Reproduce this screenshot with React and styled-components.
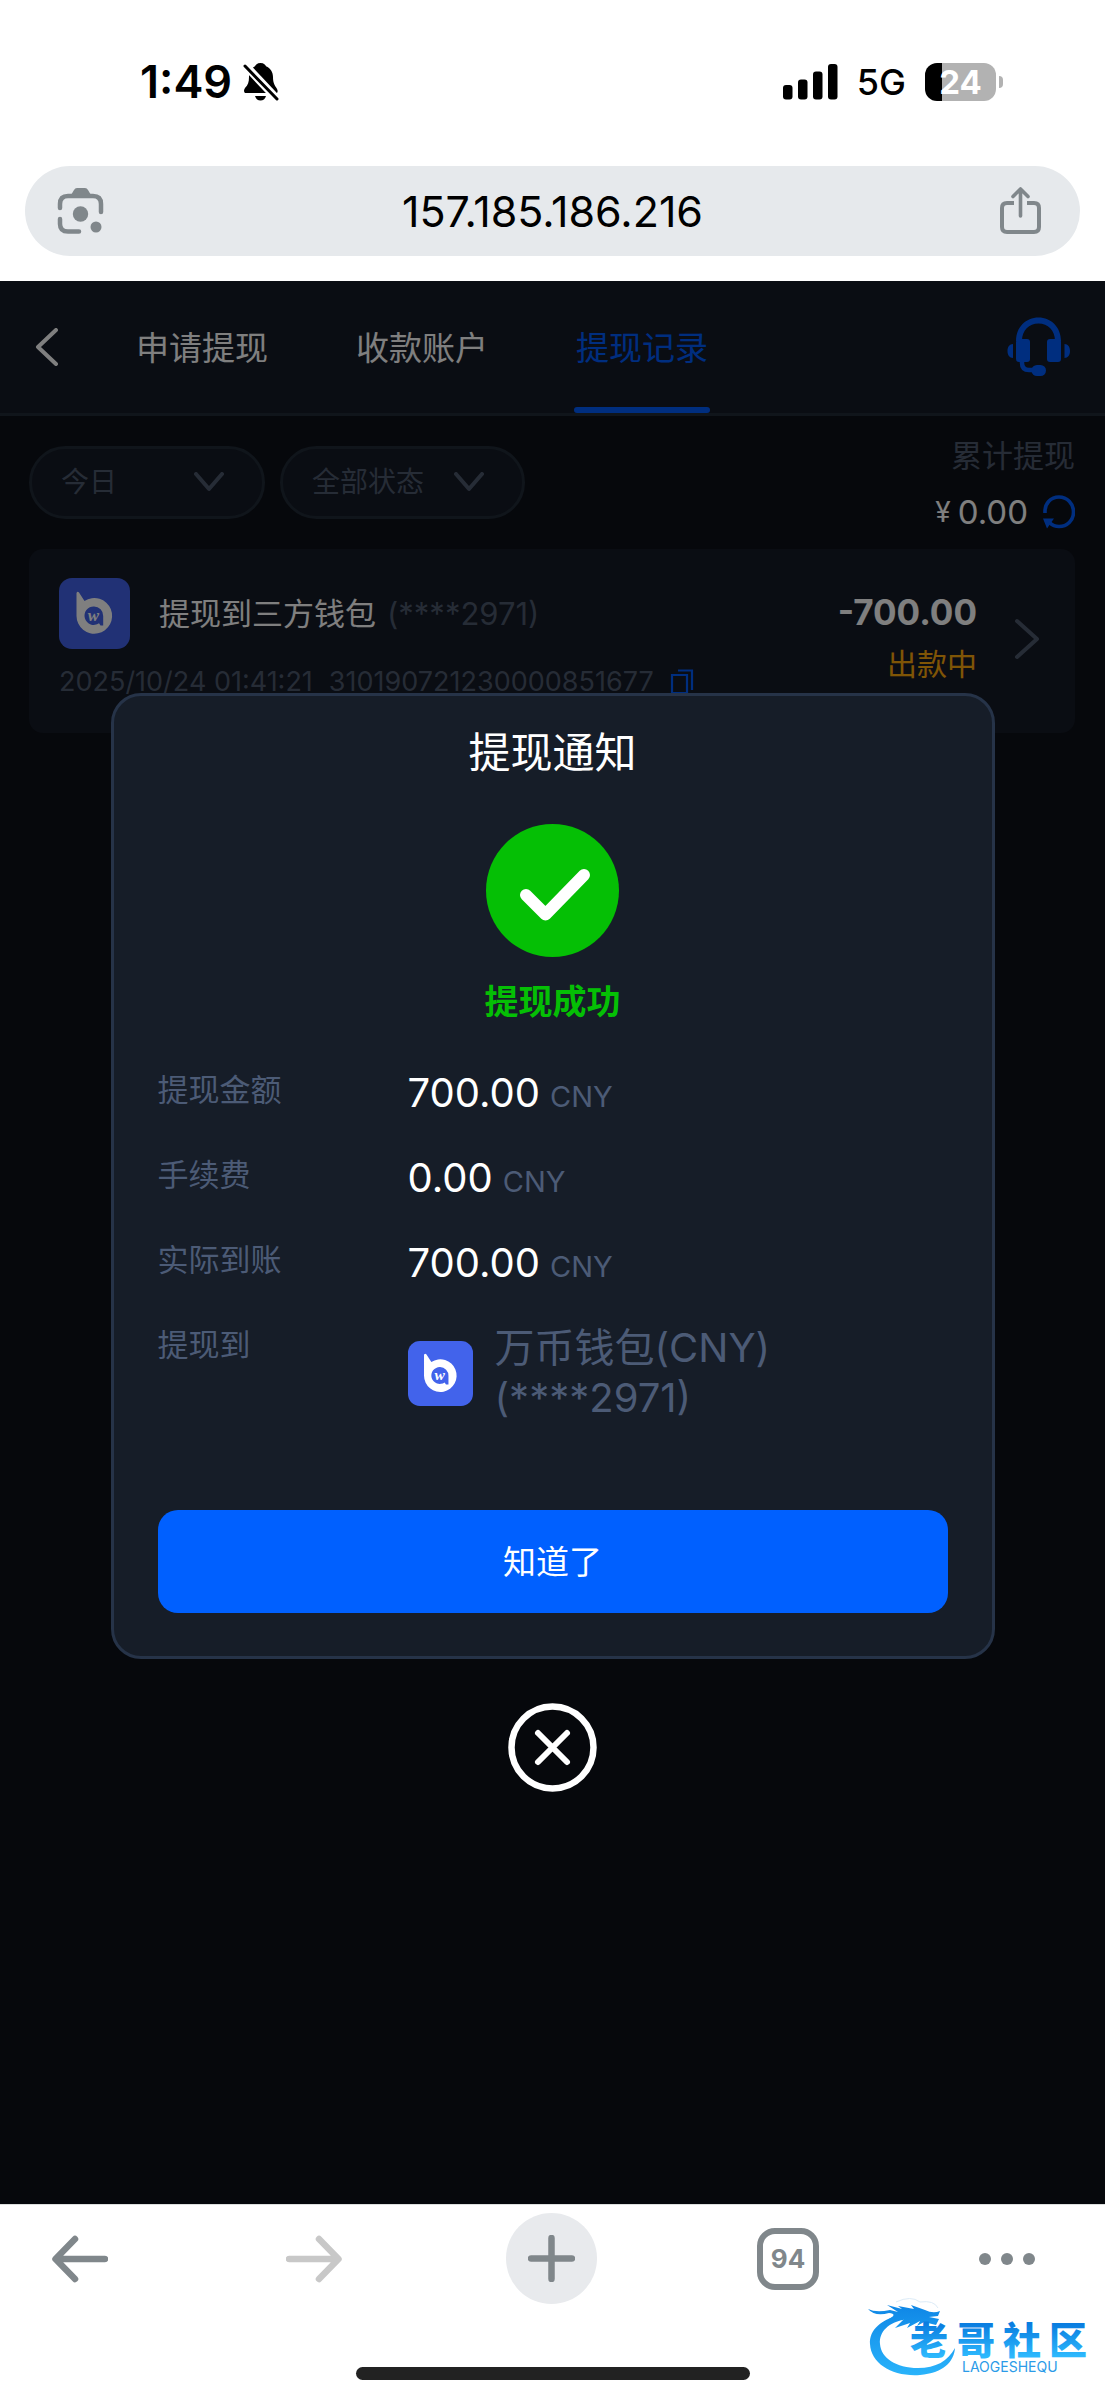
import React from "react";
import styled, { createGlobalStyle } from "styled-components";

const GlobalStyle = createGlobalStyle`
  *, *::before, *::after { box-sizing: border-box; }
  body {
    margin: 0;
    background: #fff;
    font-family: Inter, "Noto Sans CJK SC", sans-serif;
  }
  button, input, select { font: inherit; color: inherit; border: 0; padding: 0; margin: 0; background: none; }
  button { cursor: pointer; }
  svg { display: block; flex: none; }
`;

const Page = styled.div`
  display: flex;
  flex-direction: column;
  min-height: 100vh;
`;

/* ---------- phone status bar and address bar ---------- */

const StatusBar = styled.header`
  display: flex;
  align-items: center;
  justify-content: space-between;
  height: 166px;
  padding: 0 102px 2px 140px;
  color: #000;
`;

const StatusGroup = styled.div`
  display: flex;
  align-items: center;
  gap: ${(p) => p.$gap}px;
`;

const Clock = styled.time`
  font-size: 45px;
  line-height: 52px;
  font-weight: 600;
`;

const Network = styled.span`
  font-size: 36px;
  line-height: 44px;
  font-weight: 500;
`;

const Battery = styled.div`
  display: flex;
  align-items: center;
  gap: 3px;
`;

const BatteryBody = styled.div`
  display: flex;
  align-items: center;
  justify-content: center;
  width: 71px;
  height: 38px;
  border-radius: 12px;
  background: linear-gradient(90deg, #000 17px, #b2b2b2 17px);
  color: #fff;
  font-size: 33px;
  line-height: 38px;
  font-weight: 700;
`;

const BatteryNub = styled.div`
  width: 4px;
  height: 12px;
  border-radius: 0 6px 6px 0;
  background: #b2b2b2;
`;

const AddressBar = styled.div`
  display: flex;
  align-items: center;
  height: 90px;
  margin: 0 25px 25px;
  padding: 0 39px 0 32px;
  border-radius: 45px;
  background: #e6e9ec;
  color: #80878b;
`;

const AddressInput = styled.input`
  flex: 1;
  min-width: 0;
  text-align: center;
  font-size: 43px;
  line-height: 52px;
  color: #000;
  outline: none;
`;

/* ---------- web page ---------- */

const Site = styled.main`
  position: relative;
  flex: 1;
  background: #0d1018;
  color: #fff;
`;

const TabHeader = styled.div`
  display: flex;
  align-items: center;
  height: 135px;
  padding: 0 34px;
  border-bottom: 3px solid #202a36;
  background: #141a26;
`;

const TabList = styled.nav`
  display: flex;
  align-self: stretch;
  gap: 84px;
  flex: 1;
  margin-left: 76px;
`;

const Tab = styled.button`
  display: flex;
  flex-direction: column;
  padding-top: 4px;
  font-size: 33px;
  font-weight: 400;
  color: ${(p) => (p.$active ? "#005cff" : "#fff")};

  &::after {
    content: "";
    width: 100%;
    height: 6px;
    border-radius: 3px;
    background: ${(p) => (p.$active ? "#005cff" : "transparent")};
  }
`;

const TabLabel = styled.span`
  display: flex;
  align-items: center;
  flex: 1;
  padding: 0 2px;
`;

const Toolbar = styled.div`
  display: flex;
  align-items: center;
  gap: 15px;
  padding: 12px 30px 9px 29px;
`;

const Filter = styled.label`
  display: flex;
  align-items: center;
  width: ${(p) => p.$width}px;
  height: 73px;
  margin-bottom: 4px;
  padding: 0 38px 0 29px;
  border: 3px solid #202a36;
  border-radius: 37px;
  background: #141a26;
  color: #4d586c;
`;

const FilterSelect = styled.select`
  appearance: none;
  flex: 1;
  min-width: 0;
  font-size: 28px;
  line-height: 40px;
  outline: none;
`;

const Summary = styled.div`
  display: flex;
  flex-direction: column;
  align-items: flex-end;
  margin-left: auto;
  font-size: 31px;
  line-height: 56px;
`;

const SummaryLabel = styled.span`
  color: #4d586c;
`;

const SummaryValue = styled.span`
  display: flex;
  align-items: center;
  gap: 7px;
  font-size: 33px;
`;

const Currency = styled.small`
  font-size: 28px;
`;

const RefreshButton = styled.button`
  margin-left: 8px;
  color: #005cff;
`;

const Card = styled.article`
  display: flex;
  align-items: flex-start;
  height: 184px;
  margin: 0 30px 0 29px;
  padding: 29px 35px 0 30px;
  border-radius: 14px;
  background: #141a26;
`;

const CardMain = styled.div`
  display: flex;
  flex-direction: column;
  gap: 16px;
  flex: 1;
`;

const CardTitle = styled.div`
  display: flex;
  align-items: center;
  gap: 11px;
  font-size: 31px;
  line-height: 44px;
`;

const TitleText = styled.span`
  margin-left: 18px;
`;

const Muted = styled.span`
  color: #4d586c;
`;

const Meta = styled.div`
  display: flex;
  align-items: center;
  gap: 16px;
  font-size: 27px;
  line-height: 34px;
  color: #4d586c;
`;

const CopyButton = styled.button`
  color: #005cff;
`;

const CardSide = styled.div`
  display: flex;
  flex-direction: column;
  align-items: flex-end;
  padding-top: 8px;
  line-height: 52px;
`;

const Amount = styled.strong`
  font-size: 35px;
  font-weight: 700;
`;

const State = styled.span`
  font-size: 30px;
  color: #ffaa0c;
`;

const OpenButton = styled.button`
  margin: 40px 0 0 37px;
  color: #4d586c;
`;

/* ---------- dialog ---------- */

const Overlay = styled.div`
  position: absolute;
  inset: 0;
  display: flex;
  flex-direction: column;
  align-items: center;
  justify-content: center;
  gap: 44px;
  background: rgba(0, 0, 0, 0.5);
`;

const Dialog = styled.section`
  display: flex;
  flex-direction: column;
  align-items: center;
  width: 80%;
  padding: 27px 44px 43px;
  border: 3px solid #263348;
  border-radius: 30px;
  background: #161d28;
`;

const DialogTitle = styled.h2`
  margin: 0 0 41px;
  font-size: 42px;
  line-height: 60px;
  font-weight: 400;
`;

const Result = styled.p`
  margin: 20px 0 41px;
  font-size: 34px;
  line-height: 50px;
  font-weight: 700;
  color: #05bf05;
`;

const Details = styled.dl`
  display: flex;
  flex-direction: column;
  align-self: stretch;
  gap: 35px;
  margin: 0 0 87px;
`;

const Row = styled.div`
  display: flex;
  align-items: flex-start;
`;

const RowLabel = styled.dt`
  flex: 0 0 250px;
  font-size: 31px;
  line-height: 44px;
  color: #4c5b76;
`;

const RowValue = styled.dd`
  display: flex;
  align-items: ${(p) => (p.$center ? "center" : "baseline")};
  gap: ${(p) => (p.$center ? 22 : 10)}px;
  margin: 0;
  font-size: 40px;
  line-height: 50px;
`;

const Unit = styled.small`
  font-size: 29px;
  line-height: 32px;
  color: #4c5b76;
`;

const Wallet = styled.span`
  color: #4c5b76;
`;

const Confirm = styled.button`
  align-self: stretch;
  height: 103px;
  border-radius: 20px;
  background: #0060ff;
  font-size: 33px;
  line-height: 48px;
`;

/* ---------- browser toolbar ---------- */

const BrowserBar = styled.footer`
  position: relative;
  display: flex;
  flex-direction: column;
  align-items: center;
  gap: 63px;
  padding: 8px 0 20px;
  border-top: 1px solid #dcdfde;
  background: #fff;
`;

const BrowserActions = styled.div`
  display: flex;
  align-items: center;
  justify-content: space-between;
  align-self: stretch;
  padding: 0 70px 0 52px;
`;

const BarButton = styled.button`
  width: ${(p) => p.$width}px;
  color: ${(p) => (p.$dim ? "#c8c8c8" : "#80878b")};
`;

const NewTab = styled.button`
  display: grid;
  place-items: center;
  width: 91px;
  height: 91px;
  border-radius: 50%;
  background: #e8eaed;
  color: #80878b;
`;

const TabCount = styled.button`
  width: 62px;
  height: 62px;
  border: 6px solid #80878b;
  border-radius: 18px;
  font-size: 26px;
  line-height: 48px;
  font-weight: 700;
  color: #80878b;
`;

const HomeIndicator = styled.div`
  width: 394px;
  height: 13px;
  border-radius: 7px;
  background: #222;
`;

const Watermark = styled.div`
  position: absolute;
  right: 14px;
  bottom: 22px;
`;

/* ---------- drawings ---------- */

const line = { fill: "none", stroke: "currentColor", strokeLinecap: "round", strokeLinejoin: "round" };

const BellOff = () => (
  <svg width="36" height="40" viewBox="0 0 36 40" aria-hidden="true">
    <path d="M17.500 1C21 1 22.500 3 23 4.200C27.500 6 30 10 30 15C30 20 31 22.500 33.500 26Q35.500 29 34 31H2Q0 29 2 26C5 23 6 20 6 15C6 10 8.500 6 12 4.200C12.500 3 14 1 17.500 1Z" fill="#000" />
    <path d="M12 34H23Q21.500 38.500 17.500 38.500Q13.500 38.500 12 34Z" fill="#000" />
    <path d="M2 3L35 38" stroke="#fff" strokeWidth="8" />
    <path d="M2 4L34 37" stroke="#000" strokeWidth="3" strokeLinecap="round" />
  </svg>
);

const Signal = () => (
  <svg width="55" height="36" viewBox="0 0 55 36" aria-label="信号">
    <rect x="0" y="21" width="9.500" height="14.500" rx="3" />
    <rect x="15" y="15.500" width="9.500" height="20" rx="3" />
    <rect x="30" y="7.500" width="9.500" height="28" rx="3" />
    <rect x="45" y="0" width="9.500" height="35.500" rx="3" />
  </svg>
);

const Lens = () => (
  <svg width="48" height="48" viewBox="0 0 48 48" aria-hidden="true">
    <path d="M3 21V17Q3 9 11 9H36Q44 9 44 17V25M3 32V37Q3 44.500 11 44.500H22" {...line} strokeWidth="4.500" />
    <path d="M14 8L17 3Q18 1 20 1H28Q30 1 31 3L34 8Z" fill="currentColor" />
    <circle cx="23.500" cy="27" r="7.700" fill="currentColor" />
    <circle cx="39" cy="40" r="5.500" fill="currentColor" />
  </svg>
);

const Share = () => (
  <svg width="41" height="48" viewBox="0 0 41 48" aria-hidden="true">
    <path d="M14 16H7Q2 16 2 21V40Q2 45 7 45H34Q39 45 39 40V21Q39 16 34 16H27" fill="none" stroke="currentColor" strokeWidth="4" />
    <path d="M20.500 29V3M13 9.500L20.500 2L28 9.500" {...line} strokeWidth="3.600" />
  </svg>
);

const Chevron = ({ w, h, d, sw = 4 }) => (
  <svg width={w} height={h} viewBox={`0 0 ${w} ${h}`} aria-hidden="true">
    <path d={d} {...line} strokeWidth={sw} />
  </svg>
);

const Headset = () => (
  <svg width="64" height="60" viewBox="0 0 64 60" fill="#005cff" aria-hidden="true">
    <path d="M9 24C9 10 19 0.500 31.500 0.500S54 10 54 24H48C48 13 41 6.500 31.500 6.500S15 13 15 24Z" />
    <rect x="9" y="22" width="14" height="23" rx="3" />
    <rect x="40" y="22" width="14" height="23" rx="3" />
    <path d="M6 27V41C2.500 41 0.500 38 0.500 34S2.500 27 6 27ZM57.500 27V41C61 41 63 38 63 34S61 27 57.500 27Z" />
    <path d="M15 44V46Q15 53 22 53H28" fill="none" stroke="#005cff" strokeWidth="4.500" />
    <rect x="24.500" y="48" width="14.500" height="11" rx="5.500" />
  </svg>
);

const Refresh = () => (
  <svg width="32" height="34" viewBox="0 0 32 34" aria-hidden="true">
    <path d="M2 18C1.500 8 8 2 16 2C24 2 30.500 8.500 30.500 17S24 31.500 16 31.500Q10.500 31.500 7 28" fill="none" stroke="currentColor" strokeWidth="3.600" />
    <path d="M0 23.500H11L4 33.500Z" fill="currentColor" />
  </svg>
);

const Copy = () => (
  <svg width="24" height="26" viewBox="0 0 24 26" aria-hidden="true">
    <path d="M2 6H17V24H2ZM8 1.500H22V21" fill="none" stroke="currentColor" strokeWidth="2.200" />
  </svg>
);

const WalletLogo = ({ size }) => (
  <svg width={size} height={size} viewBox="0 0 71 71" role="img" aria-label="钱包">
    <rect width="71" height="71" rx="13" fill="#4263eb" />
    <path d="M17.500 38V15Q18.500 13 20 14.500L25.500 23A17.800 17.800 0 1 1 17.500 38Z" fill="#fff" />
    <path d="M35 28.500A9.200 9.200 0 0 1 44.200 38V47.500H41.500L40 45.200A9.200 9.200 0 1 1 35 28.500Z" fill="#4263eb" />
    <text x="34.500" y="42.500" textAnchor="middle" fontFamily="Liberation Serif, serif" fontSize="17" fontWeight="700" fontStyle="italic" fill="#fff">w</text>
  </svg>
);

const Success = () => (
  <svg width="133" height="133" viewBox="0 0 133 133" aria-hidden="true">
    <circle cx="66.500" cy="66.500" r="66.500" fill="#05bf05" />
    <path d="M40 71L59.500 90.500L98 51" fill="none" stroke="#fff" strokeWidth="12" strokeLinecap="round" strokeLinejoin="round" />
  </svg>
);

const CloseIcon = () => (
  <svg width="89" height="89" viewBox="0 0 89 89" aria-hidden="true">
    <circle cx="44.500" cy="44.500" r="41" fill="none" stroke="#fff" strokeWidth="6.500" />
    <path d="M30 30L59 59M59 30L30 59" stroke="#fff" strokeWidth="6" strokeLinecap="round" />
  </svg>
);

const Arrow = ({ flip }) => (
  <svg width="56" height="48" viewBox="0 0 56 48" aria-hidden="true">
    <path d={flip ? "M3 24H52M33 4L52.500 24L33 44" : "M53 24H4M23 4L3.500 24L23 44"} {...line} strokeWidth="6.500" />
  </svg>
);

const Plus = () => (
  <svg width="47" height="47" viewBox="0 0 47 47" aria-hidden="true">
    <path d="M23.500 3V44M3 23.500H44" {...line} strokeWidth="6.500" />
  </svg>
);

const Dots = () => (
  <svg width="56" height="12" viewBox="0 0 56 12" fill="currentColor" aria-hidden="true">
    <circle cx="6" cy="6" r="6" />
    <circle cx="28" cy="6" r="6" />
    <circle cx="50" cy="6" r="6" />
  </svg>
);

const DragonLogo = () => (
  <svg width="224" height="84" viewBox="0 0 224 84" role="img" aria-label="老哥社区">
    <defs>
      <linearGradient id="ink" gradientUnits="userSpaceOnUse" x1="0" y1="12" x2="0" y2="82">
        <stop offset="0" stopColor="#0f87e6" />
        <stop offset="1" stopColor="#2ab4fb" />
      </linearGradient>
      <linearGradient id="word" gradientUnits="userSpaceOnUse" x1="0" y1="30" x2="0" y2="62">
        <stop offset="0" stopColor="#0a7de0" />
        <stop offset="1" stopColor="#2db8fd" />
      </linearGradient>
    </defs>
    <path d="M38 19C14 25 2 36 3 50C4 70 26 83 53 81C76 79 87 68 88 54C81 67 69 74 51 74C29 74 14 64 13 50C12 38 21 28 40 25Z" fill="url(#ink)" />
    <path d="M1 15Q9 19 23 16L31 18L20 11L35 15L31 12L47 15L44 11L58 16Q66 20 73 17L71 22L62 23L72 25L69 31L57 28L50 32L53 27L40 34L43 29L28 34L37 25L22 25Q31 20 22 19Q8 23 1 15Z" fill="url(#ink)" />
    <path d="M29 8Q44 1 53 8Q67 6 71 14" fill="none" stroke="#dcebf7" strokeWidth="1" />
    <g fill="url(#word)" fontFamily="Noto Sans CJK SC, sans-serif" fontSize="38" fontWeight="900" textAnchor="middle">
      <text x="62" y="60">老</text>
      <text x="109" y="60">哥</text>
      <text x="155" y="60">社</text>
      <text x="201" y="60">区</text>
    </g>
    <text x="95" y="78" fontFamily="Inter, sans-serif" fontSize="14" fill="#2b9be8">LAOGESHEQU</text>
  </svg>
);

const amounts = [
  { label: "提现金额", value: "700.00" },
  { label: "手续费", value: "0.00" },
  { label: "实际到账", value: "700.00" },
];

const tabs = ["申请提现", "收款账户", "提现记录"];

export default function App() {
  return (
    <Page>
      <GlobalStyle />
      <StatusBar>
        <StatusGroup $gap={11}>
          <Clock>1:49</Clock>
          <BellOff />
        </StatusGroup>
        <StatusGroup $gap={19}>
          <Signal />
          <Network>5G</Network>
          <Battery>
            <BatteryBody>24</BatteryBody>
            <BatteryNub />
          </Battery>
        </StatusGroup>
      </StatusBar>
      <AddressBar>
        <button type="button" aria-label="相机搜索"><Lens /></button>
        <AddressInput aria-label="网址" defaultValue="157.185.186.216" />
        <button type="button" aria-label="分享"><Share /></button>
      </AddressBar>

      <Site>
        <TabHeader>
          <button type="button" aria-label="返回"><Chevron w={24} h={38} d="M22 2L4 19L22 36" /></button>
          <TabList>
            {tabs.map((name, i) => (
              <Tab key={name} type="button" $active={i === 2}>
                <TabLabel>{name}</TabLabel>
              </Tab>
            ))}
          </TabList>
          <button type="button" aria-label="客服"><Headset /></button>
        </TabHeader>

        <Toolbar>
          <Filter $width={236}>
            <FilterSelect aria-label="日期" defaultValue="今日"><option>今日</option></FilterSelect>
            <Chevron w={30} h={20} d="M2 2L15 17L28 2" />
          </Filter>
          <Filter $width={245}>
            <FilterSelect aria-label="状态" defaultValue="全部状态"><option>全部状态</option></FilterSelect>
            <Chevron w={30} h={20} d="M2 2L15 17L28 2" />
          </Filter>
          <Summary>
            <SummaryLabel>累计提现</SummaryLabel>
            <SummaryValue>
              <Currency>¥</Currency>0.00
              <RefreshButton type="button" aria-label="刷新"><Refresh /></RefreshButton>
            </SummaryValue>
          </Summary>
        </Toolbar>

        <Card>
          <CardMain>
            <CardTitle>
              <WalletLogo size={71} />
              <TitleText>提现到三方钱包</TitleText>
              <Muted>(****2971)</Muted>
            </CardTitle>
            <Meta>
              <span>2025/10/24 01:41:21</span>
              <span>310190721230000851677</span>
              <CopyButton type="button" aria-label="复制"><Copy /></CopyButton>
            </Meta>
          </CardMain>
          <CardSide>
            <Amount>-700.00</Amount>
            <State>出款中</State>
          </CardSide>
          <OpenButton type="button" aria-label="详情"><Chevron w={26} h={42} d="M3 3L23 21L3 39" /></OpenButton>
        </Card>

        <Overlay>
          <Dialog role="dialog" aria-labelledby="notice-title">
            <DialogTitle id="notice-title">提现通知</DialogTitle>
            <Success />
            <Result>提现成功</Result>
            <Details>
              {amounts.map((row) => (
                <Row key={row.label}>
                  <RowLabel>{row.label}</RowLabel>
                  <RowValue>{row.value}<Unit>CNY</Unit></RowValue>
                </Row>
              ))}
              <Row>
                <RowLabel>提现到</RowLabel>
                <RowValue $center>
                  <WalletLogo size={65} />
                  <Wallet>万币钱包(CNY)<br />(****2971)</Wallet>
                </RowValue>
              </Row>
            </Details>
            <Confirm type="button">知道了</Confirm>
          </Dialog>
          <button type="button" aria-label="关闭"><CloseIcon /></button>
        </Overlay>
      </Site>

      <BrowserBar>
        <BrowserActions>
          <BarButton type="button" $width={74} aria-label="后退"><Arrow /></BarButton>
          <BarButton type="button" $width={60} $dim aria-label="前进"><Arrow flip /></BarButton>
          <NewTab type="button" aria-label="新标签页"><Plus /></NewTab>
          <TabCount type="button">94</TabCount>
          <BarButton type="button" $width={56} aria-label="更多"><Dots /></BarButton>
        </BrowserActions>
        <HomeIndicator />
        <Watermark><DragonLogo /></Watermark>
      </BrowserBar>
    </Page>
  );
}
